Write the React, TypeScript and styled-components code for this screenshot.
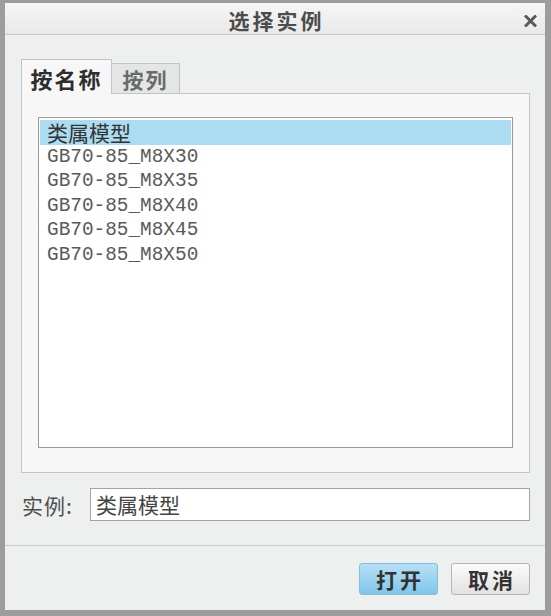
import React from "react";
import styled, { createGlobalStyle, css } from "styled-components";

const INSTANCES = [
  "类属模型",
  "GB70-85_M8X30",
  "GB70-85_M8X35",
  "GB70-85_M8X40",
  "GB70-85_M8X45",
  "GB70-85_M8X50",
];

const CJK = `"Noto Sans CJK SC", "Noto Sans", sans-serif`;
const MONO = `"Liberation Mono", "Noto Sans CJK SC", monospace`;

const CloseIcon = () => (
  <svg width="13" height="12" viewBox="0 0 13 12">
    <path d="M2 1.5 L11 10.5 M11 1.5 L2 10.5" stroke="#5a5a5a" strokeWidth="3" strokeLinecap="square" />
  </svg>
);

const App = () => {
  return (
    <>
      <GlobalStyle />
      <Window>
        <TitleBar>
          <Title>选择实例</Title>
          <CloseButton>
            <CloseIcon />
          </CloseButton>
        </TitleBar>
        <Body>
          <TabRow>
            <Tab active>按名称</Tab>
            <Tab>按列</Tab>
          </TabRow>
          <TabPanel>
            <List>
              {INSTANCES.map((item, i) => (
                <ListRow key={item} selected={i === 0} mono={i !== 0}>
                  {item}
                </ListRow>
              ))}
            </List>
          </TabPanel>
          <InstanceRow>
            <Label>实例:</Label>
            <Input>类属模型</Input>
          </InstanceRow>
        </Body>
        <Footer>
          <Button primary>打开</Button>
          <Button>取消</Button>
        </Footer>
      </Window>
    </>
  );
};

export default App;

const GlobalStyle = createGlobalStyle`
  * { box-sizing: border-box; }
  body {
    margin: 0;
    background: #ededed;
    font-family: ${CJK};
  }
`;

const Window = styled.div`
  display: flex;
  flex-direction: column;
  width: 551px;
  height: 616px;
  background: #eeefef;
  border-style: solid;
  border-color: #9d9d9d;
  border-width: 3px 6px 6px 5px;
`;

const TitleBar = styled.div`
  position: relative;
  display: flex;
  align-items: center;
  justify-content: center;
  height: 32px;
  background: linear-gradient(#f6f6f6, #e9e9e9);
  border-bottom: 1px solid #c6c6c6;
`;

const Title = styled.div`
  margin-top: 3px;
  padding-left: 3px;
  font-size: 21px;
  font-weight: 700;
  line-height: 22px;
  letter-spacing: 3px;
  color: #4c4c4c;
`;

const CloseButton = styled.div`
  position: absolute;
  right: 8px;
  top: 12px;
  display: flex;
`;

const Body = styled.div`
  display: flex;
  flex-direction: column;
  padding: 24px 15px 24px 16px;
  border-bottom: 1px solid #c9c9c9;
`;

const TabRow = styled.div`
  display: flex;
  align-items: flex-end;
  height: 34px;
`;

const Tab = styled.div<{ active?: boolean }>`
  display: flex;
  align-items: center;
  justify-content: center;
  height: 30px;
  width: 68px;
  font-size: 21px;
  font-weight: 700;
  line-height: 22px;
  letter-spacing: 2px;
  color: #6a6a6a;
  background: #e4e5e5;
  border: 1px solid #c4c4c4;
  border-bottom: none;
  border-left: none;

  ${(props) =>
    props.active &&
    css`
      position: relative;
      z-index: 1;
      height: 35px;
      width: 91px;
      margin-bottom: -1px;
      padding-top: 2px;
      font-size: 22px;
      color: #2e2e2e;
      background: #f7f7f7;
      border-left: 1px solid #c4c4c4;
    `}
`;

const TabPanel = styled.div`
  display: flex;
  height: 380px;
  padding: 23px 16px 24px 16px;
  background: #f7f7f7;
  border: 1px solid #c4c4c4;
`;

const List = styled.div`
  flex: 1;
  display: flex;
  flex-direction: column;
  padding: 2px 1px;
  background: #ffffff;
  border: 1px solid #9a9a9a;
`;

const ListRow = styled.div<{ selected?: boolean; mono?: boolean }>`
  height: 24.6px;
  padding-left: 7px;
  font-family: ${(props) => (props.mono ? MONO : CJK)};
  font-size: ${(props) => (props.mono ? "19.4px" : "21px")};
  line-height: 25px;
  color: ${(props) => (props.mono ? "#5a5a5a" : "#333333")};
  background: ${(props) => (props.selected ? "#abdcf1" : "transparent")};
  white-space: nowrap;
`;

const InstanceRow = styled.div`
  display: flex;
  align-items: center;
  margin-top: 15px;
  height: 33px;
`;

const Label = styled.div`
  width: 69px;
  padding-left: 1px;
  font-size: 21px;
  line-height: 22px;
  letter-spacing: 1px;
  color: #4e4e4e;
`;

const Input = styled.div`
  flex: 1;
  height: 33px;
  padding-left: 5px;
  font-size: 21px;
  line-height: 31px;
  color: #444444;
  background: #ffffff;
  border: 1px solid #a3a3a3;
`;

const Footer = styled.div`
  flex: 1;
  display: flex;
  justify-content: flex-end;
  align-items: flex-start;
  gap: 13px;
  padding: 17px 15px 0 0;
  background: #eeefef;
`;

const Button = styled.div<{ primary?: boolean }>`
  display: flex;
  align-items: center;
  justify-content: center;
  width: 79px;
  height: 32px;
  font-size: 21px;
  font-weight: 700;
  line-height: 22px;
  letter-spacing: 3px;
  padding-left: 3px;
  color: #333333;
  border-radius: 3px;
  border: 1px solid #b5b5b5;
  background: linear-gradient(#fbfbfb, #e2e2e2);

  ${(props) =>
    props.primary &&
    css`
      border-color: #86bcdc;
      background: linear-gradient(#b6e0f5, #80c6ea);
    `}
`;
